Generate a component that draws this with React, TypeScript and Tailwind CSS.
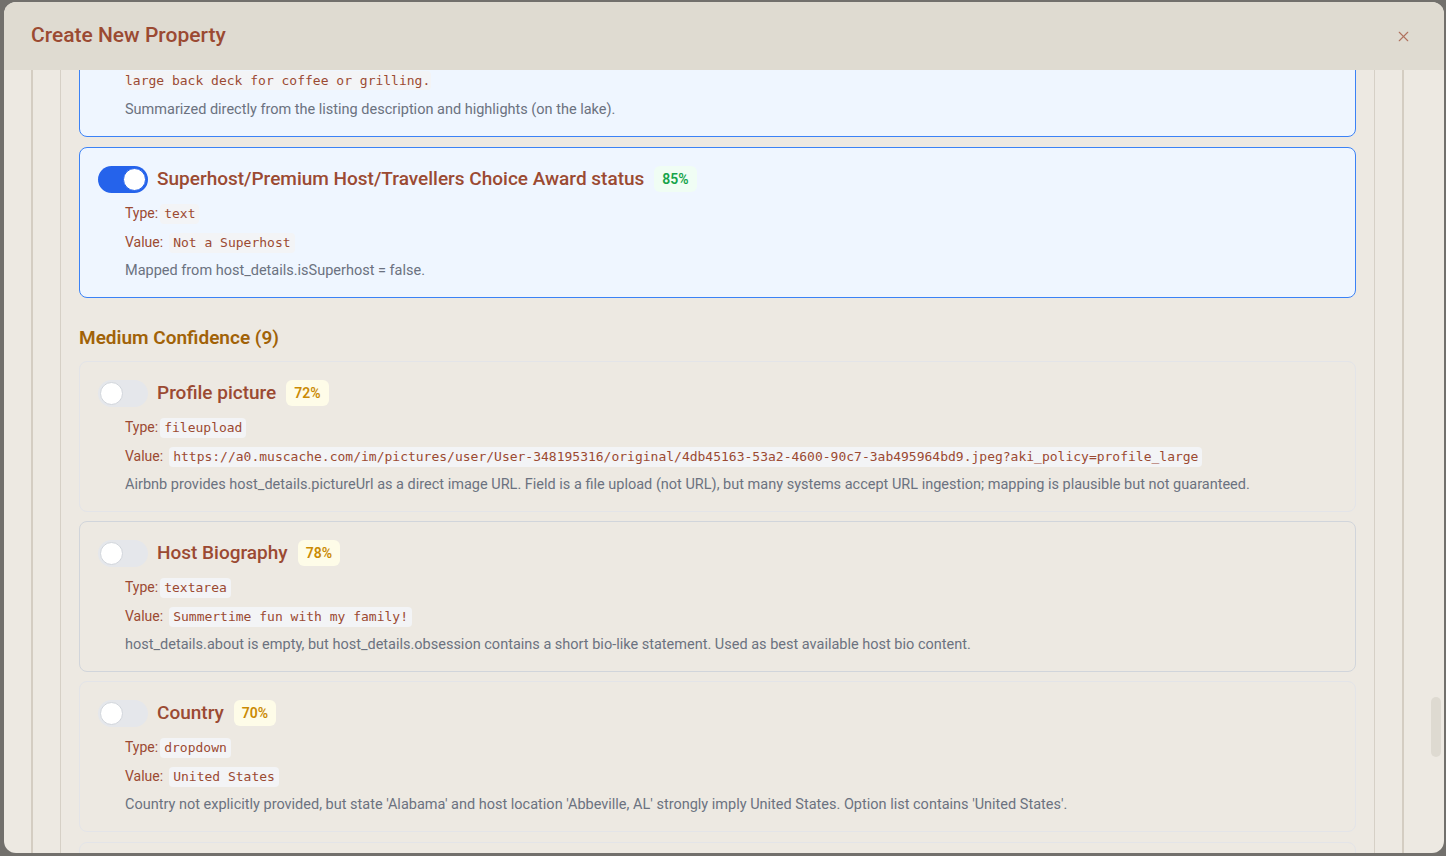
import React from "react";
import { X } from "lucide-react";

const sans = { fontFamily: "Roboto, 'Noto Sans', sans-serif" };

function Toggle({ on }: { on: boolean }) {
  return (
    <div
      className={
        "flex h-[27px] w-[50px] shrink-0 items-center rounded-full px-[2px] " +
        (on ? "justify-end bg-[#2563eb]" : "justify-start bg-[#e5e7eb]")
      }
    >
      <div
        className={
          "h-[23px] w-[23px] rounded-full border bg-white " +
          (on ? "border-[#2563eb]" : "border-[#d1d5db]")
        }
      />
    </div>
  );
}

function Chip({ children }: { children: React.ReactNode }) {
  return (
    <code className="inline-block h-5 rounded bg-[#f3f4f6] px-1 font-['DejaVu_Sans_Mono',monospace] text-[13px] leading-5 text-[#9b4a32]">
      {children}
    </code>
  );
}

type CardProps = {
  title: string;
  pct: string;
  level: "high" | "medium";
  on: boolean;
  type: string;
  value: React.ReactNode;
  desc: string;
  border: string;
  multi?: boolean;
  className?: string;
};

function Card({ title, pct, level, on, type, value, desc, border, multi, className }: CardProps) {
  return (
    <div
      className={
        "rounded-lg border px-[18px] pb-[16px] pt-[17px] " +
        border +
        (level === "high" && on ? " bg-[#eff6ff]" : "") +
        " " +
        (className ?? "")
      }
    >
      <div className="flex h-[28px] items-center gap-[9px]">
        <Toggle on={on} />
        <span className="text-[19px] font-medium leading-7 text-[#9b4a32]">{title}</span>
        <span
          className={
            "ml-px flex h-[26px] items-center rounded-md px-2 text-[14px] font-semibold " +
            (level === "high" ? "bg-[#f0fdf4] text-[#16a34a]" : "bg-[#fefce8] text-[#ca8a04]")
          }
        >
          {pct}
        </span>
      </div>
      <div className="pl-[27px]">
        <div className="mt-[10px] flex h-5 items-center text-sm text-[#9b4a32]">
          Type:<span className="ml-[2px]"><Chip>{type}</Chip></span>
        </div>
        {multi ? (
          <div className="mt-[9px] text-sm leading-5 text-[#9b4a32]">
            Value:{" "}
            <code className="rounded bg-[#f3f4f6] px-px py-[2px] font-['DejaVu_Sans_Mono',monospace] text-[13px] leading-5">
              {value}
            </code>
          </div>
        ) : (
          <div className="mt-[9px] flex h-5 items-center text-sm text-[#9b4a32]">
            Value:<span className="ml-[6px]"><Chip>{value}</Chip></span>
          </div>
        )}
        <div className="mt-[9px] text-[14.5px] leading-5 text-[#6b7280]">{desc}</div>
      </div>
    </div>
  );
}

export default function App() {
  return (
    <div className="h-[856px] w-[1446px] overflow-hidden bg-[#72706c] pl-[4px] pt-[2px]" style={sans}>
      <div className="flex h-[851px] w-[1440px] flex-col overflow-hidden rounded-xl bg-[#ede9e2]">
        <div className="flex h-[68px] shrink-0 items-center justify-between bg-[#dfdbd1] pl-[27px] pr-[32px]">
          <h2 className="text-[21px] font-medium text-[#9b4a32]">Create New Property</h2>
          <X size={17} strokeWidth={1.6} className="text-[#b0735f]" />
        </div>
        <div className="flex min-h-0 flex-1">
          <div className="min-w-0 flex-1 overflow-hidden px-[27px]">
            <div className="min-h-full border-x-2 border-[#d4cdc2] px-[27px]">
              <div className="min-h-full border-x border-[#d6d0c6] px-[18px]">
                <div className="flex flex-col">
                  <Card
                    className="-mt-[106px]"
                    title="Property Description"
                    pct="92%"
                    level="high"
                    on
                    type="textarea"
                    multi
                    value={
                      <>
                        Charming lakefront home with a private dock, screened porch and open living area. Enjoy sunset views and a
                        <br />
                        large back deck for coffee or grilling.
                      </>
                    }
                    desc="Summarized directly from the listing description and highlights (on the lake)."
                    border="border-[#3b82f6]"
                  />
                  <Card
                    className="mt-[10px]"
                    title="Superhost/Premium Host/Travellers Choice Award status"
                    pct="85%"
                    level="high"
                    on
                    type="text"
                    value="Not a Superhost"
                    desc="Mapped from host_details.isSuperhost = false."
                    border="border-[#3b82f6]"
                  />
                  <h3 className="mb-[9px] mt-[26px] text-[19px] font-semibold leading-7 text-[#a16207]">
                    Medium Confidence (9)
                  </h3>
                  <Card
                    title="Profile picture"
                    pct="72%"
                    level="medium"
                    on={false}
                    type="fileupload"
                    value="https://a0.muscache.com/im/pictures/user/User-348195316/original/4db45163-53a2-4600-90c7-3ab495964bd9.jpeg?aki_policy=profile_large"
                    desc="Airbnb provides host_details.pictureUrl as a direct image URL. Field is a file upload (not URL), but many systems accept URL ingestion; mapping is plausible but not guaranteed."
                    border="border-[#e3e4e8]"
                  />
                  <Card
                    className="mt-[9px]"
                    title="Host Biography"
                    pct="78%"
                    level="medium"
                    on={false}
                    type="textarea"
                    value="Summertime fun with my family!"
                    desc="host_details.about is empty, but host_details.obsession contains a short bio-like statement. Used as best available host bio content."
                    border="border-[#d1d5db]"
                  />
                  <Card
                    className="mt-[9px]"
                    title="Country"
                    pct="70%"
                    level="medium"
                    on={false}
                    type="dropdown"
                    value="United States"
                    desc="Country not explicitly provided, but state 'Alabama' and host location 'Abbeville, AL' strongly imply United States. Option list contains 'United States'."
                    border="border-[#e3e4e8]"
                  />
                  <Card
                    className="mt-[10px]"
                    title="State"
                    pct="68%"
                    level="medium"
                    on={false}
                    type="dropdown"
                    value="Alabama"
                    desc="Derived from the listing location."
                    border="border-[#e3e4e8]"
                  />
                </div>
              </div>
            </div>
          </div>
          <div className="w-[13px] shrink-0 pt-[627px]">
            <div className="h-[60px] w-[10px] rounded-full bg-[#dedad1]" />
          </div>
        </div>
      </div>
    </div>
  );
}
